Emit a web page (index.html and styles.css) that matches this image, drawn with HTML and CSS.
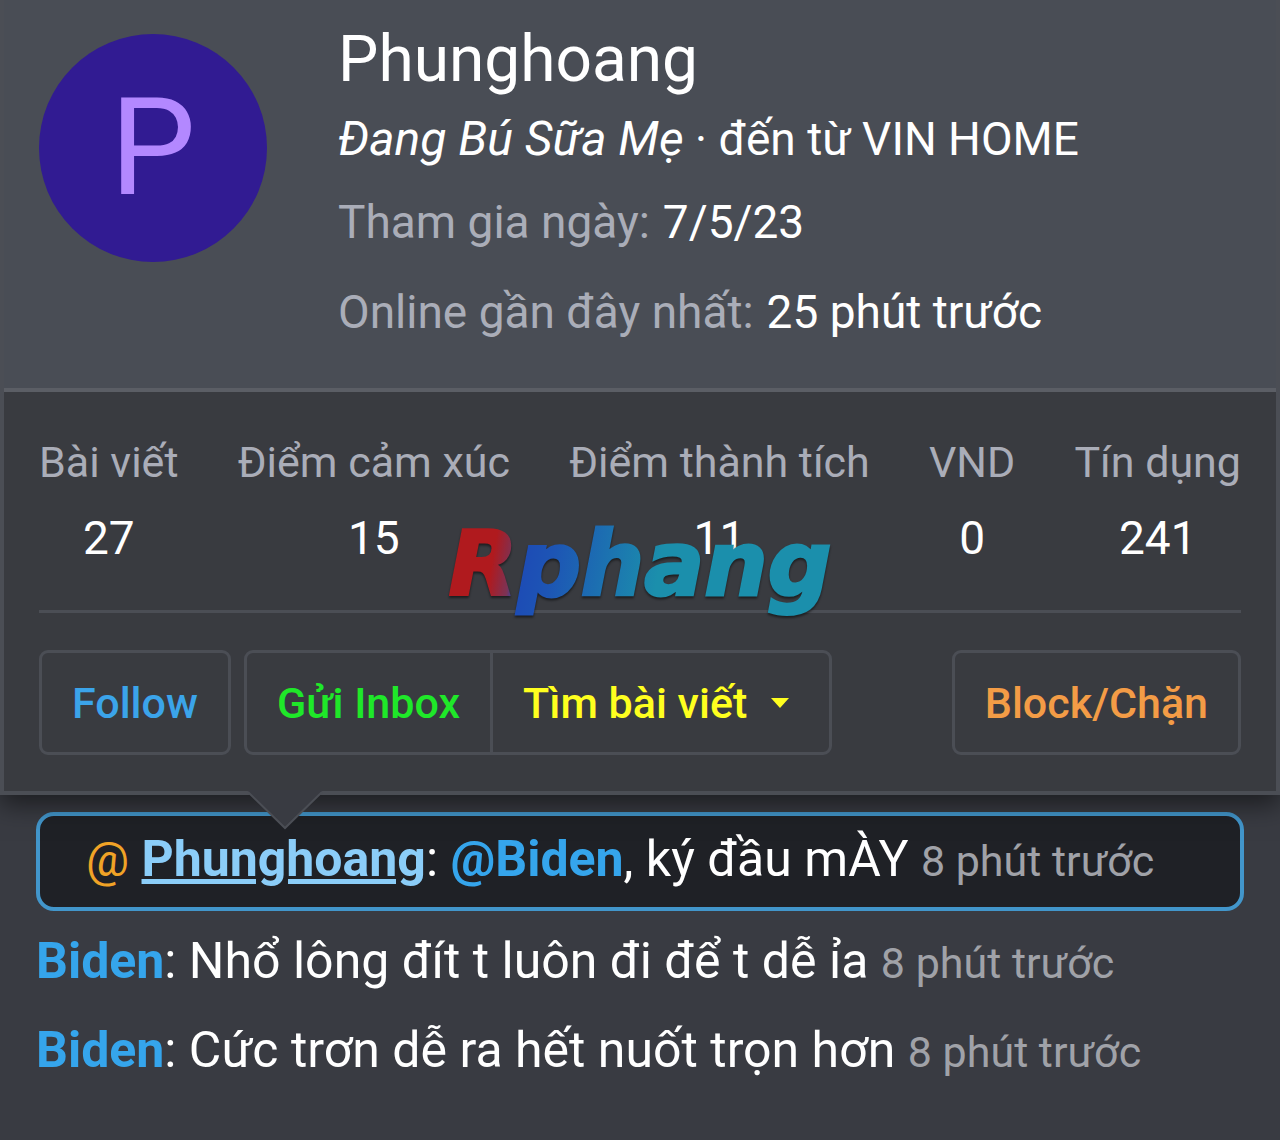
FILE: index.html
```
<!DOCTYPE html>
<html lang="vi">
<head>
    <meta charset="UTF-8">
    <meta name="viewport" content="width=device-width, initial-scale=1.0">
    <title>Phunghoang</title>

    <link rel="stylesheet" href="styles.css">
</head>
<body>
    <div class="card">
        <div class="card-header">
            <div class="avatar">P</div>
            <div class="info">
                <h1 class="name">Phunghoang</h1>
                <p class="blurb"><em>Đang Bú Sữa Mẹ</em> · đến từ VIN HOME</p>
                <dl class="row">
                    <dt>Tham gia ngày:</dt>
                    <dd>7/5/23</dd>
                </dl>
                <dl class="row">
                    <dt>Online gần đây nhất:</dt>
                    <dd>25 phút trước</dd>
                </dl>
            </div>
        </div>

        <div class="card-body">
            <div class="stats">
                <dl><dt>Bài viết</dt><dd>27</dd></dl>
                <dl><dt>Điểm cảm xúc</dt><dd>15</dd></dl>
                <dl><dt>Điểm thành tích</dt><dd>11</dd></dl>
                <dl><dt>VND</dt><dd>0</dd></dl>
                <dl><dt>Tín dụng</dt><dd>241</dd></dl>
                <div class="logo">Rphang</div>
            </div>
            <div class="actions">
                <button type="button" class="btn follow">Follow</button>
                <div class="btn-group">
                    <button type="button" class="btn inbox">Gửi Inbox</button>
                    <button type="button" class="btn find">Tìm bài viết
                        <svg class="caret" viewBox="0 0 18 10"><path d="M0 0h18L9 10z"/></svg>
                    </button>
                </div>
                <button type="button" class="btn block">Block/Chặn</button>
            </div>
        </div>

        <svg class="arrow" viewBox="0 0 76 40">
            <path class="arrow-fill" d="M0 0H76L73 4L38 39L3 4z"/>
            <path class="arrow-line" d="M1 2L38 38L75 2"/>
        </svg>
    </div>

    <div class="chat">
        <div class="message mention">
            <span class="at">@</span> <a href="#" class="user own">Phunghoang</a>: <a href="#" class="user">@Biden</a>, ký đầu mÀY <time>8 phút trước</time>
        </div>
        <div class="message">
            <a href="#" class="user">Biden</a>: Nhổ lông đít t luôn đi để t dễ ỉa <time>8 phút trước</time>
        </div>
        <div class="message">
            <a href="#" class="user">Biden</a>: Cức trơn dễ ra hết nuốt trọn hơn <time>8 phút trước</time>
        </div>
    </div>
</body>
</html>
```

FILE: styles.css
```
*{
    margin: 0;
    padding: 0;
    box-sizing: border-box;
}

body{
    background: #393b42;
    color: #fff;
    font-family: Roboto, "Liberation Sans", sans-serif;
    font-size: 46px;
    line-height: 54px;
}

a{
    text-decoration: none;
}

/* member card */
.card{
    position: relative;
    background: #393b40;
    border: 4px solid #4b4e55;
    border-top: 0;
    box-shadow: 0 10px 24px rgba(0, 0, 0, 0.5);
}

.card-header{
    display: flex;
    gap: 71px;
    padding: 24px 35px 49px;
    background: #494d55;
    border-bottom: 4px solid #5b5e65;
}

.avatar{
    flex: none;
    width: 228px;
    height: 228px;
    margin-top: 10px;
    border-radius: 50%;
    background: #311b92;
    color: #b388ff;
    font-size: 136px;
    line-height: 228px;
    text-align: center;
}

.name{
    font-size: 64px;
    font-weight: 400;
    line-height: 72px;
    margin-bottom: 16px;
}

.blurb{
    margin-bottom: 29px;
}

.blurb em{
    font-size: 48px;
}

.row{
    display: flex;
    flex-wrap: wrap;
    column-gap: 13px;
}

.row + .row{
    margin-top: 36px;
}

dt{
    color: #aaadb8;
}

.card-body{
    padding: 0 35px 36px;
}

.stats{
    position: relative;
    display: flex;
    justify-content: space-between;
    padding: 43px 0 45px;
    border-bottom: 3px solid #4b4e55;
    text-align: center;
}

.stats dt{
    font-size: 43px;
}

.stats dd{
    margin-top: 22px;
}

/* watermark over the numbers */
.logo{
    position: absolute;
    left: 50%;
    bottom: -6px;
    transform: translateX(-50%);
    font-family: "DejaVu Sans", sans-serif;
    font-size: 89px;
    font-weight: 700;
    font-style: italic;
    line-height: 104px;
    color: transparent;
    -webkit-text-stroke: 3px transparent;
    background: linear-gradient(100deg, #b01a1e 13%, #7b3356 18%, #1d4bb5 20%, #1d55b5 28%, #1b8fac 55%);
    -webkit-background-clip: text;
    background-clip: text;
    filter: drop-shadow(0 2px 1px rgba(0, 0, 0, 0.5));
}

.actions{
    display: flex;
    gap: 13px;
    padding-top: 37px;
}

.btn{
    height: 105px;
    padding: 0 30px;
    background: transparent;
    border: 3px solid #4b4e55;
    border-radius: 9px;
    font-family: inherit;
    font-size: 43px;
    font-weight: 500;
    cursor: pointer;
}

.btn-group{
    display: flex;
}

.follow{
    color: #3ba4ea;
}

.inbox{
    color: #1fe829;
    border-radius: 9px 0 0 9px;
}

.find{
    display: flex;
    align-items: center;
    gap: 24px;
    padding-right: 40px;
    margin-left: -3px;
    color: #ffff1f;
    border-radius: 0 9px 9px 0;
}

.caret{
    width: 18px;
    height: 10px;
    fill: currentColor;
}

.block{
    margin-left: auto;
    color: #f39c46;
}

.arrow{
    position: absolute;
    top: calc(100% - 1px);
    left: 243px;
    width: 76px;
    height: 40px;
}

.arrow-fill{
    fill: #393b42;
}

.arrow-line{
    fill: none;
    stroke: #4b4e55;
    stroke-width: 2;
}

/* chat */
.chat{
    padding: 17px 36px 0;
}

.message{
    font-size: 50px;
    line-height: 87px;
}

.mention{
    padding: 0 46px 2px;
    margin-bottom: 7px;
    background: #1f2126;
    border: 4px solid #4296cb;
    border-radius: 18px;
}

.user{
    color: #35a5ec;
    font-weight: 700;
}

.own{
    color: #8bcdf8;
    text-decoration: underline;
    text-decoration-thickness: 5px;
}

.at{
    color: #f0a326;
    font-size: 48px;
}

time{
    color: #a0a2a8;
    font-size: 43px;
}
```
